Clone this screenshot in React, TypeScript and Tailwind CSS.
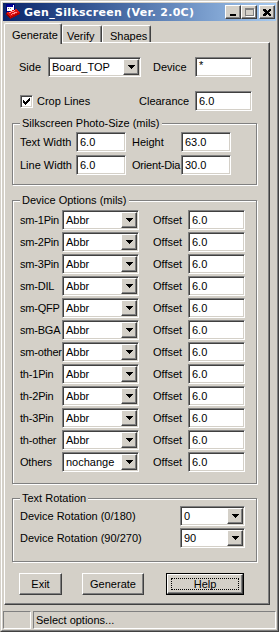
import React from "react";

const sunken =
  "bg-white border border-t-[#808080] border-l-[#808080] border-r-white border-b-white shadow-[inset_1px_1px_0_#404040,inset_-1px_-1px_0_#D4D0C8]";
const raised =
  "bg-[#D4D0C8] border border-t-white border-l-white border-r-[#404040] border-b-[#404040] shadow-[inset_-1px_-1px_0_#808080]";

function Tri() {
  return (
    <svg width="7" height="4" viewBox="0 0 7 4" shapeRendering="crispEdges">
      <path d="M0 0h7v1h-1v1h-1v1h-1v1h-1v-1h-1v-1h-1v-1h-1z" fill="#000" />
    </svg>
  );
}

function Combo({ cls, value }: { cls: string; value: string }) {
  return (
    <div className={`${sunken} ${cls} shrink-0 flex items-stretch p-px`}>
      <div className="flex-1 flex items-center pl-[2px] leading-none">{value}</div>
      <div className={`${raised} w-[16px] flex items-center justify-center`}>
        <Tri />
      </div>
    </div>
  );
}

function TextBox({ cls, value }: { cls: string; value: string }) {
  return (
    <div className={`${sunken} ${cls} shrink-0 flex items-center pl-[3px] leading-none`}>{value}</div>
  );
}

function Label({ cls, children }: { cls: string; children: React.ReactNode }) {
  return <div className={`${cls} shrink-0 whitespace-nowrap`}>{children}</div>;
}

function Group({ title, cls, children }: { title: string; cls: string; children: React.ReactNode }) {
  return (
    <div
      className={`relative border border-[#808080] shadow-[1px_1px_0_#fff,inset_1px_1px_0_#fff] ${cls}`}
    >
      <span className="absolute left-[7px] top-[-7px] bg-[#D4D0C8] px-[2px] leading-[13px] whitespace-nowrap">
        {title}
      </span>
      {children}
    </div>
  );
}

function Button({ cls, label, def }: { cls: string; label: string; def?: boolean }) {
  if (def) {
    return (
      <div className={`${cls} h-[22px] border border-black`}>
        <div className={`${raised} h-full flex items-center justify-center p-[3px]`}>
          <div className="w-full h-full flex items-center justify-center outline-1 outline-dotted outline-black -outline-offset-1">
            {label}
          </div>
        </div>
      </div>
    );
  }
  return (
    <div className={`${raised} ${cls} h-[22px] flex items-center justify-center`}>{label}</div>
  );
}

function TitleIcon() {
  return (
    <svg width="16" height="16" viewBox="0 0 16 16" shapeRendering="crispEdges">
      <rect x="1" y="0" width="8" height="7" fill="#fff" />
      <rect x="1" y="0" width="8" height="7" fill="none" stroke="#000080" strokeWidth="1" />
      <rect x="2" y="1" width="6" height="2" fill="#0000a0" />
      <rect x="3" y="4" width="1" height="1" fill="#808080" />
      <rect x="5" y="4" width="1" height="1" fill="#808080" />
      <path d="M1 9 L11 5 L15 8 L5 13 Z" fill="#e01010" />
      <path d="M1 9 L5 13 L5 15 L1 11 Z" fill="#900000" />
      <path d="M5 13 L15 8 L15 10 L5 15 Z" fill="#b00000" />
      <path d="M4 9 L10 6.5 M6 10.5 L12 8" stroke="#ff9090" strokeWidth="1" />
    </svg>
  );
}

function CapBtn({ children, cls }: { children: React.ReactNode; cls?: string }) {
  return (
    <div className={`${raised} w-[16px] h-[14px] flex items-center justify-center ${cls ?? ""}`}>
      {children}
    </div>
  );
}

const deviceRows: [string, string][] = [
  ["sm-1Pin", "Abbr"],
  ["sm-2Pin", "Abbr"],
  ["sm-3Pin", "Abbr"],
  ["sm-DIL", "Abbr"],
  ["sm-QFP", "Abbr"],
  ["sm-BGA", "Abbr"],
  ["sm-other", "Abbr"],
  ["th-1Pin", "Abbr"],
  ["th-2Pin", "Abbr"],
  ["th-3Pin", "Abbr"],
  ["th-other", "Abbr"],
  ["Others", "nochange"],
];

export default function App() {
  return (
    <div className="font-['Liberation_Sans',Arial,sans-serif] text-[11px] text-black w-[279px] h-[632px] bg-[#D4D0C8] border border-t-[#D4D0C8] border-l-[#D4D0C8] border-r-[#404040] border-b-[#404040] overflow-hidden">
      <div className="h-full border border-t-white border-l-white border-r-[#808080] border-b-[#808080] p-px flex flex-col">
        {/* Title bar */}
        <div className="h-[18px] flex items-center bg-gradient-to-r from-[#0A246A] to-[#A6CAF0] shrink-0">
          <div className="ml-[2px] w-[16px] h-[16px]">
            <TitleIcon />
          </div>
          <div className="ml-[3px] text-white font-bold text-[11px] tracking-[0.3px] font-['DejaVu_Sans',sans-serif] whitespace-nowrap leading-none">
            Gen_Silkscreen (Ver. 2.0C)
          </div>
          <div className="ml-auto mr-[1px] flex items-center">
            <CapBtn>
              <div className="w-[6px] h-[2px] bg-black mt-[6px] -ml-[1px]" />
            </CapBtn>
            <CapBtn>
              <div className="w-[9px] h-[8px] border border-t-2 border-[#808080] shadow-[1px_1px_0_#fff]" />
            </CapBtn>
            <CapBtn cls="ml-[2px]">
              <svg width="8" height="7" viewBox="0 0 8 7" shapeRendering="crispEdges">
                <path d="M0 0h2l2 2l2-2h2v1l-2 2.5l2 2.5v1h-2l-2-2l-2 2h-2v-1l2-2.5l-2-2.5z" fill="#000" />
              </svg>
            </CapBtn>
          </div>
        </div>

        {/* Tabs */}
        <div className="h-[21px] flex items-end pl-px shrink-0">
          <div className="relative z-10 w-[58px] h-[21px] mb-[-2px] bg-[#D4D0C8] border-l border-t border-r border-l-white border-t-white border-r-[#404040] rounded-t-[2px] shadow-[inset_-1px_0_0_#808080] flex items-start pt-[3px] pl-[7px]">
            Generate
          </div>
          <div className="w-[40px] h-[17px] bg-[#D4D0C8] border-l border-t border-r border-l-white border-t-white border-r-[#404040] rounded-t-[2px] shadow-[inset_-1px_0_0_#808080] flex items-start pt-[2px] pl-[4px]">
            Verify
          </div>
          <div className="w-[49px] h-[17px] bg-[#D4D0C8] border-l border-t border-r border-l-white border-t-white border-r-[#404040] rounded-t-[2px] shadow-[inset_-1px_0_0_#808080] flex items-start pt-[2px] pl-[7px]">
            Shapes
          </div>
        </div>

        {/* Panel */}
        <div className="ml-px w-[266px] h-[563px] shrink-0 border border-t-white border-l-white border-r-[#404040] border-b-[#404040] shadow-[inset_-1px_-1px_0_#808080] flex flex-col">
          {/* Row 1 */}
          <div className="mt-[14px] h-[20px] flex items-center">
            <Label cls="ml-[14px] w-[29px]">Side</Label>
            <Combo cls="w-[93px] h-[20px]" value="Board_TOP" />
            <Label cls="ml-[12px] w-[42px]">Device</Label>
            <TextBox cls="w-[57px] h-[20px] items-start pt-[2px]" value="*" />
          </div>
          {/* Row 2 */}
          <div className="mt-[14px] h-[20px] flex items-center">
            <div className={`${sunken} ml-[15px] w-[13px] h-[13px] shrink-0 flex items-center justify-center`}>
              <svg width="7" height="7" viewBox="0 0 7 7" shapeRendering="crispEdges">
                <path d="M0 2h1v1h1v1h1v-1h1v-1h1v-1h1v-1h1v3h-1v1h-1v1h-1v1h-1v1h-1v-1h-1v-1h-1v-1h-1z" fill="#000" />
              </svg>
            </div>
            <Label cls="ml-[4px] w-[102px]">Crop Lines</Label>
            <Label cls="w-[56px]">Clearance</Label>
            <TextBox cls="w-[57px] h-[20px]" value="6.0" />
          </div>

          {/* Group 1 */}
          <Group title="Silkscreen Photo-Size (mils)" cls="mt-[12px] ml-[7px] w-[245px] h-[62px] shrink-0">
            <div className="pt-[8px] pl-[7px] flex flex-col gap-[3px]">
              <div className="flex items-center h-[20px]">
                <Label cls="w-[56px]">Text Width</Label>
                <TextBox cls="w-[50px] h-[20px]" value="6.0" />
                <Label cls="ml-[6px] w-[49px]">Height</Label>
                <TextBox cls="w-[50px] h-[20px]" value="63.0" />
              </div>
              <div className="flex items-center h-[20px]">
                <Label cls="w-[56px]">Line Width</Label>
                <TextBox cls="w-[50px] h-[20px]" value="6.0" />
                <Label cls="ml-[6px] w-[49px] tracking-[-0.2px]">Orient-Dia</Label>
                <TextBox cls="w-[50px] h-[20px]" value="30.0" />
              </div>
            </div>
          </Group>

          {/* Group 2 */}
          <Group title="Device Options (mils)" cls="mt-[15px] ml-[7px] w-[245px] h-[284px] shrink-0">
            <div className="pt-[9px] pl-[7px] flex flex-col gap-[2px]">
              {deviceRows.map(([label, val]) => (
                <div key={label} className="flex items-center h-[20px]">
                  <Label cls="w-[42px] tracking-[-0.2px]">{label}</Label>
                  <Combo cls="w-[77px] h-[20px]" value={val} />
                  <Label cls="ml-[14px] w-[35px]">Offset</Label>
                  <TextBox cls="w-[57px] h-[20px]" value="6.0" />
                </div>
              ))}
            </div>
          </Group>

          {/* Group 3 */}
          <Group title="Text Rotation" cls="mt-[14px] ml-[7px] w-[245px] h-[64px] shrink-0">
            <div className="pt-[7px] pl-[7px] flex flex-col gap-[2px]">
              <div className="flex items-center h-[20px]">
                <Label cls="w-[160px]">Device Rotation (0/180)</Label>
                <Combo cls="w-[65px] h-[20px]" value="0" />
              </div>
              <div className="flex items-center h-[20px]">
                <Label cls="w-[160px]">Device Rotation (90/270)</Label>
                <Combo cls="w-[65px] h-[20px]" value="90" />
              </div>
            </div>
          </Group>

          {/* Buttons */}
          <div className="mt-[11px] flex items-center">
            <Button cls="ml-[14px] w-[43px]" label="Exit" />
            <Button cls="ml-[20px] w-[62px]" label="Generate" />
            <Button cls="ml-[22px] w-[78px]" label="Help" def />
          </div>
        </div>

        {/* Status bar */}
        <div className="mt-[6px] h-[18px] flex shrink-0">
          <div className="w-[28px] h-full border border-t-[#808080] border-l-[#808080] border-r-white border-b-white" />
          <div className="ml-[2px] flex-1 h-full border border-t-[#808080] border-l-[#808080] border-r-white border-b-white flex items-center pl-[2px]">
            Select options...
          </div>
        </div>
      </div>
    </div>
  );
}
